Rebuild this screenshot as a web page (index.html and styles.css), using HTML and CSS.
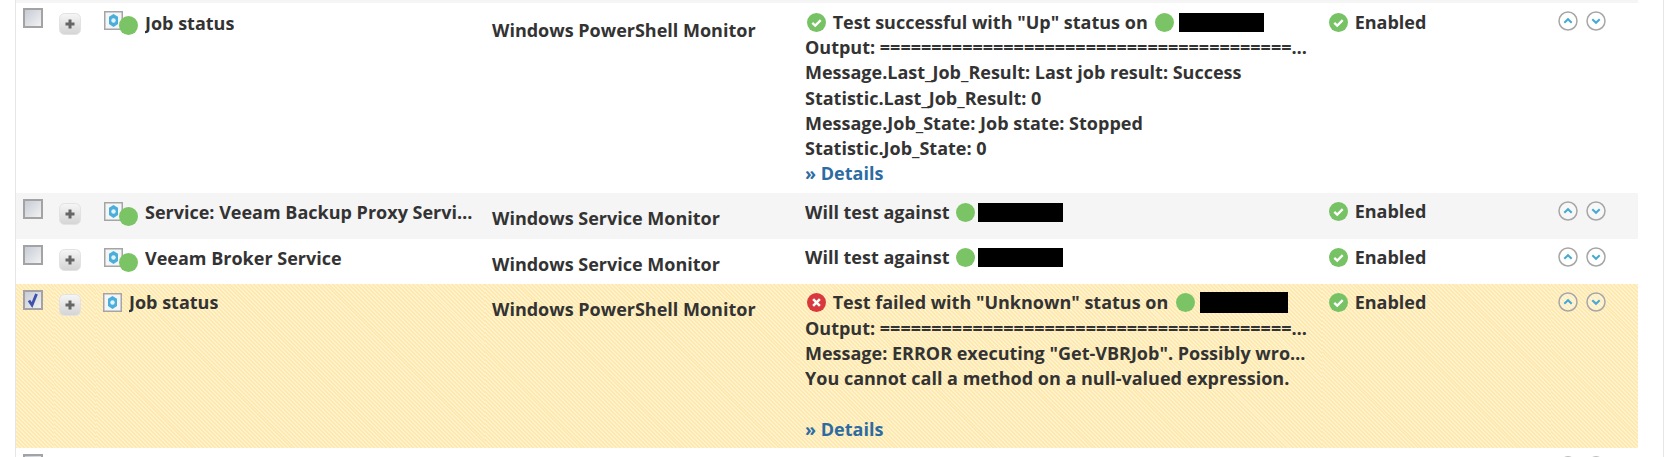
FILE: index.html
```html
<!DOCTYPE html>
<html lang="en">
<head>
    <meta charset="UTF-8">
    <meta name="viewport" content="width=device-width, initial-scale=1.0">
    <title>Monitors</title>
    <link rel="stylesheet" href="styles.css">
</head>
<body>
    <svg class="sprites" aria-hidden="true">
        <defs>
            <linearGradient id="boxFill" x1="0" y1="0" x2="1" y2="1">
                <stop offset="0" stop-color="#c4c9d4"/>
                <stop offset="1" stop-color="#f4f4f4"/>
            </linearGradient>
            <linearGradient id="plusFill" x1="0" y1="0" x2="0" y2="1">
                <stop offset="0" stop-color="#f6f6f6"/>
                <stop offset="1" stop-color="#d4d4d4"/>
            </linearGradient>
        </defs>
        <symbol id="box" viewBox="0 0 20 20">
            <rect x="1" y="1" width="18" height="18" fill="url(#boxFill)" stroke="#a3a3a3" stroke-width="2"/>
        </symbol>
        <symbol id="boxChecked" viewBox="0 0 20 20">
            <rect x="1" y="1" width="18" height="18" fill="url(#boxFill)" stroke="#a3a3a3" stroke-width="2"/>
            <path d="M6 10.500l3 4.500 4.500-11" fill="none" stroke="#3f51a8" stroke-width="2.800"/>
        </symbol>
        <symbol id="plus" viewBox="0 0 22 22">
            <rect x="0.5" y="0.5" width="21" height="21" rx="5" fill="url(#plusFill)" stroke="#e2e2e2"/>
            <path d="M11 6.500v9M6.500 11h9" stroke="#666" stroke-width="3"/>
        </symbol>
        <symbol id="monitor" viewBox="0 0 19 19">
            <rect x="0.75" y="0.75" width="17.5" height="17.500" fill="#f3f5f7" stroke="#a5a5a5" stroke-width="1.5"/>
            <path d="M9.500 3l4.500 2.700v7.200l-4.500 3-4.500-3V5.700z" fill="#49aedb"/>
            <circle cx="9.500" cy="9.500" r="2.200" fill="#e4f3fa"/>
        </symbol>
        <symbol id="ok" viewBox="0 0 18 18">
            <circle cx="9" cy="9" r="9" fill="#76c265"/>
            <path d="M5 9.300l2.800 2.700L13 6.700" fill="none" stroke="#fff" stroke-width="2.200"/>
        </symbol>
        <symbol id="fail" viewBox="0 0 18 18">
            <circle cx="9" cy="9" r="9" fill="#d9383c"/>
            <path d="M5.800 5.800l6.400 6.400M12.200 5.800l-6.400 6.400" fill="none" stroke="#fff" stroke-width="2.400"/>
        </symbol>
        <symbol id="up" viewBox="0 0 20 20">
            <circle cx="10" cy="10" r="9" fill="#fff" fill-opacity="0.25" stroke="#a6a6a6" stroke-width="1.500"/>
            <path d="M6.300 11.800L10 8.200l3.700 3.600" fill="none" stroke="#45a9d4" stroke-width="2"/>
        </symbol>
        <symbol id="down" viewBox="0 0 20 20">
            <circle cx="10" cy="10" r="9" fill="#fff" fill-opacity="0.25" stroke="#a6a6a6" stroke-width="1.500"/>
            <path d="M6.300 8.200L10 11.800l3.700-3.600" fill="none" stroke="#45a9d4" stroke-width="2"/>
        </symbol>
    </svg>

    <div class="card">
        <table class="monitors">
            <colgroup>
                <col class="col-check">
                <col class="col-expand">
                <col class="col-name">
                <col class="col-type">
                <col class="col-test">
                <col class="col-state">
                <col class="col-order">
            </colgroup>
            <tbody>
                <tr class="first">
                    <td class="check"><svg class="icon-box"><use href="#box"/></svg></td>
                    <td class="expand"><svg class="icon-plus"><use href="#plus"/></svg></td>
                    <td class="name">
                        <div class="name-line">
                            <svg class="icon-monitor"><use href="#monitor"/></svg>
                            <span class="dot dot-overlap"></span>
                            <span class="name-text">Job status</span>
                        </div>
                    </td>
                    <td class="type">Windows PowerShell Monitor</td>
                    <td class="test">
                        <div class="line"><svg class="icon-status"><use href="#ok"/></svg> Test successful with "Up" status on <span class="dot"></span><span class="redacted"></span></div>
                        <div class="line">Output: ====================================================================</div>
                        <div class="line">Message.Last_Job_Result: Last job result: Success</div>
                        <div class="line">Statistic.Last_Job_Result: 0</div>
                        <div class="line">Message.Job_State: Job state: Stopped</div>
                        <div class="line">Statistic.Job_State: 0</div>
                        <div class="line"><a class="details" href="#">» Details</a></div>
                    </td>
                    <td class="state"><svg class="icon-status"><use href="#ok"/></svg> Enabled</td>
                    <td class="order"><svg class="icon-arrow"><use href="#up"/></svg><svg class="icon-arrow"><use href="#down"/></svg></td>
                </tr>
                <tr class="alt">
                    <td class="check"><svg class="icon-box"><use href="#box"/></svg></td>
                    <td class="expand"><svg class="icon-plus"><use href="#plus"/></svg></td>
                    <td class="name">
                        <div class="name-line">
                            <svg class="icon-monitor"><use href="#monitor"/></svg>
                            <span class="dot dot-overlap"></span>
                            <span class="name-text">Service: Veeam Backup Proxy Service</span>
                        </div>
                    </td>
                    <td class="type">Windows Service Monitor</td>
                    <td class="test">
                        <div class="line line-target">Will test against <span class="dot"></span><span class="redacted"></span></div>
                    </td>
                    <td class="state"><svg class="icon-status"><use href="#ok"/></svg> Enabled</td>
                    <td class="order"><svg class="icon-arrow"><use href="#up"/></svg><svg class="icon-arrow"><use href="#down"/></svg></td>
                </tr>
                <tr>
                    <td class="check"><svg class="icon-box"><use href="#box"/></svg></td>
                    <td class="expand"><svg class="icon-plus"><use href="#plus"/></svg></td>
                    <td class="name">
                        <div class="name-line">
                            <svg class="icon-monitor"><use href="#monitor"/></svg>
                            <span class="dot dot-overlap"></span>
                            <span class="name-text">Veeam Broker Service</span>
                        </div>
                    </td>
                    <td class="type">Windows Service Monitor</td>
                    <td class="test">
                        <div class="line line-target">Will test against <span class="dot"></span><span class="redacted"></span></div>
                    </td>
                    <td class="state"><svg class="icon-status"><use href="#ok"/></svg> Enabled</td>
                    <td class="order"><svg class="icon-arrow"><use href="#up"/></svg><svg class="icon-arrow"><use href="#down"/></svg></td>
                </tr>
                <tr class="selected">
                    <td class="check"><svg class="icon-box"><use href="#boxChecked"/></svg></td>
                    <td class="expand"><svg class="icon-plus"><use href="#plus"/></svg></td>
                    <td class="name">
                        <div class="name-line">
                            <svg class="icon-monitor"><use href="#monitor"/></svg>
                            <span class="name-text">Job status</span>
                        </div>
                    </td>
                    <td class="type">Windows PowerShell Monitor</td>
                    <td class="test">
                        <div class="line"><svg class="icon-status"><use href="#fail"/></svg> Test failed with "Unknown" status on <span class="dot"></span><span class="redacted redacted-wide"></span></div>
                        <div class="line">Output: ====================================================================</div>
                        <div class="line">Message: ERROR executing "Get-VBRJob". Possibly wrong credentials or module</div>
                        <div class="line">You cannot call a method on a null-valued expression.</div>
                        <div class="line">&nbsp;</div>
                        <div class="line"><a class="details" href="#">» Details</a></div>
                    </td>
                    <td class="state"><svg class="icon-status"><use href="#ok"/></svg> Enabled</td>
                    <td class="order"><svg class="icon-arrow"><use href="#up"/></svg><svg class="icon-arrow"><use href="#down"/></svg></td>
                </tr>
                <tr>
                    <td class="check"><svg class="icon-box"><use href="#box"/></svg></td>
                    <td class="expand"><svg class="icon-plus"><use href="#plus"/></svg></td>
                    <td class="name">
                        <div class="name-line">
                            <svg class="icon-monitor"><use href="#monitor"/></svg>
                            <span class="dot dot-overlap"></span>
                        </div>
                    </td>
                    <td class="type"></td>
                    <td class="test">
                        <div class="line line-target">Will test against <span class="dot"></span></div>
                    </td>
                    <td class="state"><svg class="icon-status"><use href="#ok"/></svg></td>
                    <td class="order"><svg class="icon-arrow"><use href="#up"/></svg><svg class="icon-arrow"><use href="#down"/></svg></td>
                </tr>
            </tbody>
        </table>
    </div>
</body>
</html>
```

FILE: styles.css
```css
html, body {
    height: 100%;
    overflow: hidden;
}

body {
    margin: 0;
    padding: 0 3px 0 15px;
    background-color: #fff;
    font-family: "Open Sans", sans-serif;
    font-size: 18px;
    font-weight: 700;
    line-height: 25.2px;
    color: #333;
}

.sprites {
    position: absolute;
    width: 0;
    height: 0;
}

.card {
    height: 100%;
    overflow: hidden;
    border-left: 1px solid #e6e6e6;
    border-right: 1px solid #e6e6e6;
}

.monitors {
    width: 1622px;
    table-layout: fixed;
    border-collapse: separate;
    border-spacing: 0;
    border-top: 3px solid #f5f5f5;
}

.col-check { width: 38px; }
.col-expand { width: 42px; }
.col-name { width: 389px; }
.col-type { width: 313px; }
.col-test { width: 524px; }
.col-state { width: 229px; }
.col-order { width: 87px; }

td {
    padding: 6px 0 8px 7px;
    vertical-align: top;
}

.first td {
    padding-top: 5px;
    padding-bottom: 9px;
}

.alt td {
    background-color: #f5f5f5;
}

.selected td {
    padding-bottom: 7px;
    background-color: #fdebb7;
    background-image: repeating-linear-gradient(45deg, #fde9ae 0, #fde9ae 1.4px, #fff2cc 1.4px, #fff2cc 2.8px);
}

.check {
    line-height: 0;
}

td.expand {
    padding-left: 5px;
    padding-top: 10px;
    line-height: 0;
}

.icon-box {
    width: 20px;
    height: 20px;
}

.icon-plus {
    width: 22px;
    height: 22px;
}

.icon-monitor {
    flex: none;
    width: 19px;
    height: 19px;
    margin-top: 3px;
}

.icon-status {
    width: 19px;
    height: 19px;
    margin-left: 2px;
    margin-right: 2px;
    vertical-align: -3px;
}

.icon-arrow {
    width: 20px;
    height: 20px;
    margin-right: 8px;
}

td.name {
    padding-left: 8px;
    padding-right: 12px;
}

.selected td.name {
    padding-left: 7px;
}

.name-line {
    display: flex;
    align-items: flex-start;
}

.name-text {
    min-width: 0;
    margin-left: 7px;
    overflow: hidden;
    white-space: nowrap;
    text-overflow: ellipsis;
}

.dot {
    display: inline-block;
    width: 19px;
    height: 19px;
    border-radius: 50%;
    background-color: #7ac465;
    vertical-align: -3px;
    margin-left: 3px;
}

.dot-overlap {
    flex: none;
    margin: 8px 0 0 -4px;
}

.dot-overlap + .name-text {
    margin-top: 1px;
}

.first .name-text {
    margin-top: 3px;
}

td.type {
    padding-top: 13px;
    padding-bottom: 7px;
}

.first td.type {
    padding-top: 15px;
}

td.test {
    padding-right: 9px;
}

.first td.test,
.first td.state {
    padding-top: 7px;
    padding-bottom: 7px;
}

.alt td.test {
    padding-top: 7px;
}

.selected td.test {
    padding-bottom: 6px;
}

.selected .line:first-child {
    margin-bottom: 1px;
}

.line {
    overflow: hidden;
    white-space: nowrap;
    text-overflow: ellipsis;
}

.redacted {
    display: inline-block;
    width: 85px;
    height: 19px;
    background-color: #000;
    vertical-align: -3px;
    margin-left: 5px;
}

.redacted-wide {
    width: 88px;
    height: 21px;
    vertical-align: -4px;
}

.line-target .dot {
    margin-left: 2px;
}

.line-target .redacted {
    margin-left: 3px;
}

.details {
    color: #2d6ca2;
    text-decoration: none;
}

td.state {
    padding-left: 5px;
}

td.order {
    line-height: 0;
    padding-top: 8px;
}
```
